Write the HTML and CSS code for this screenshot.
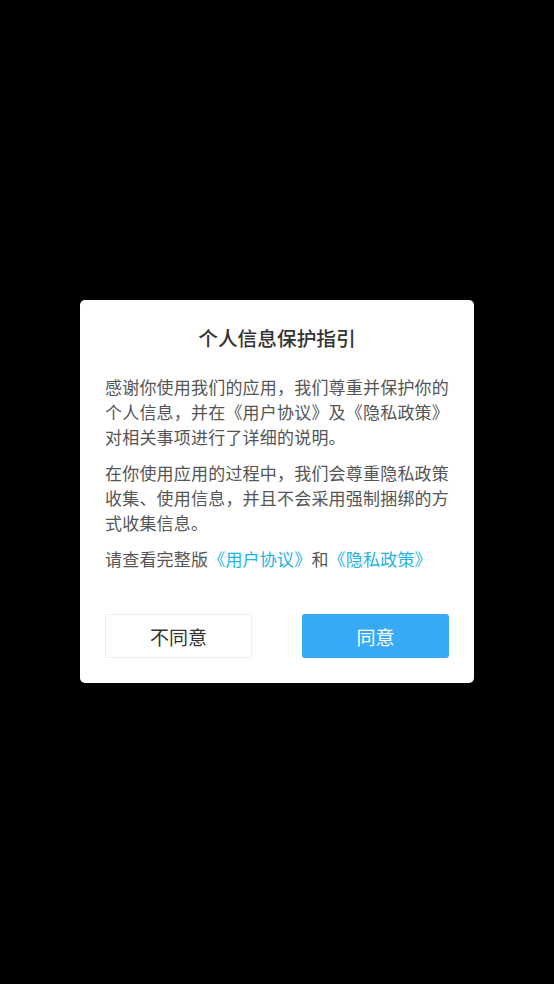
FILE: index.html
```html
<!DOCTYPE html>
<html lang="zh-CN">
<head>
<meta charset="utf-8">
<title>个人信息保护指引</title>
<link rel="stylesheet" href="styles.css">
</head>
<body>
<div class="screen">
  <div class="dialog">
    <h1 class="title">个人信息保护指引</h1>
    <div class="content">
      <p class="para">感谢你使用我们的应用，我们尊重并保护你的个人信息，并在《用户协议》及《隐私政策》对相关事项进行了详细的说明。</p>
      <p class="para">在你使用应用的过程中，我们会尊重隐私政策收集、使用信息，并且不会采用强制捆绑的方式收集信息。</p>
      <p class="para">请查看完整版<span class="link">《用户协议》</span>和<span class="link">《隐私政策》</span></p>
    </div>
    <div class="actions">
      <button class="btn btn-disagree">不同意</button>
      <button class="btn btn-agree">同意</button>
    </div>
  </div>
</div>
</body>
</html>
```

FILE: styles.css
```css
* { box-sizing: border-box; }
html, body {
  margin: 0;
  padding: 0;
  background: #000;
  width: 554px;
  height: 984px;
}
.screen {
  width: 554px;
  height: 983px;
  display: flex;
  align-items: center;
  justify-content: center;
  font-family: "Noto Sans CJK SC", "Noto Sans", sans-serif;
}
.dialog {
  width: 394px;
  height: 383px;
  background: #fff;
  border-radius: 5px;
  padding: 25px 25px 25px 25px;
  display: flex;
  flex-direction: column;
}
.title {
  margin: 0;
  font-size: 19.7px;
  line-height: 26px;
  font-weight: 500;
  color: #333;
  text-align: center;
}
.content {
  margin-top: 23px;
  flex: 1;
}
.para {
  margin: 0 0 11px 0;
  font-size: 17px;
  letter-spacing: 0.2px;
  line-height: 25px;
  color: #555;
}
.link {
  color: #1db3e5;
}
.actions {
  display: flex;
  justify-content: space-between;
}
.btn {
  width: 147px;
  height: 44px;
  border-radius: 3px;
  font-family: "Noto Sans CJK SC", "Noto Sans", sans-serif;
  font-size: 19px;
  padding: 0;
  cursor: pointer;
}
.btn-disagree {
  background: #fff;
  border: 1px solid #eeeeee;
  color: #333;
}
.btn-agree {
  background: #36a9f7;
  border: none;
  color: #fff;
}
```
